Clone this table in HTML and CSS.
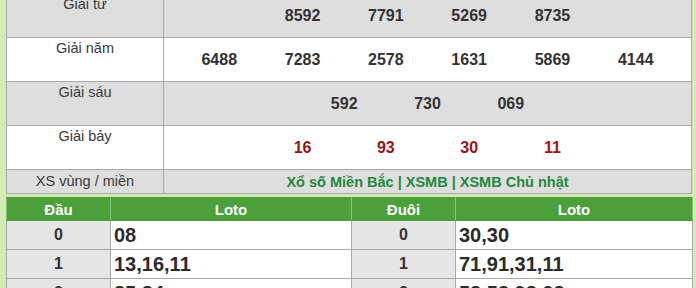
FILE: index.html
```html
<!DOCTYPE html>
<html lang="vi">
<head>
<meta charset="utf-8">
<title>XSMB</title>
<link rel="stylesheet" href="styles.css">
</head>
<body>
<div class="page">
  <table class="kq">
    <colgroup><col class="c-label"><col class="c-nums"></colgroup>
    <tbody>
      <tr class="alt"><td class="lbl">Giải tư</td><td class="nums"><span>8592</span><span>7791</span><span>5269</span><span>8735</span></td></tr>
      <tr><td class="lbl">Giải năm</td><td class="nums"><span>6488</span><span>7283</span><span>2578</span><span>1631</span><span>5869</span><span>4144</span></td></tr>
      <tr class="alt"><td class="lbl">Giải sáu</td><td class="nums"><span>592</span><span>730</span><span>069</span></td></tr>
      <tr><td class="lbl">Giải bảy</td><td class="nums red"><span>16</span><span>93</span><span>30</span><span>11</span></td></tr>
      <tr class="alt short"><td class="lbl mid">XS vùng / miền</td><td class="links"><a href="#">Xổ số Miền Bắc</a> | <a href="#">XSMB</a> | <a href="#">XSMB Chủ nhật</a></td></tr>
    </tbody>
  </table>
  <table class="loto">
    <colgroup><col class="c-key"><col class="c-val"><col class="c-key"><col class="c-val2"></colgroup>
    <thead>
      <tr><th>Đầu</th><th>Loto</th><th>Đuôi</th><th>Loto</th></tr>
    </thead>
    <tbody>
      <tr><td class="key">0</td><td class="val">08</td><td class="key">0</td><td class="val">30,30</td></tr>
      <tr><td class="key">1</td><td class="val">13,16,11</td><td class="key">1</td><td class="val">71,91,31,11</td></tr>
      <tr><td class="key">2</td><td class="val">25,24</td><td class="key">2</td><td class="val">52,52,92,92</td></tr>
    </tbody>
  </table>
</div>
</body>
</html>
```
FILE: styles.css
```css
body {
  margin: 0;
  background: #d5ebb4;
  font-family: "Liberation Sans", Arial, sans-serif;
  color: #333;
}
.page {
  margin-top: -7px;
  padding: 0 4px 0 6px;
}
table {
  border-collapse: collapse;
  table-layout: fixed;
  width: 686px;
}
.c-label { width: 157px; }
.kq td {
  border: 1px solid #a9a9a9;
  padding: 0;
  height: 43px;
  background: #fff;
}
.kq tr.alt td { background: #dedede; }
.kq tr.short td { height: 23px; }
.kq td.lbl {
  vertical-align: top;
  text-align: center;
  font-size: 14.5px;
  line-height: 17px;
  padding-top: 2px;
  height: 41px;
  color: #3a3a3a;
}
.kq tr.short td.lbl { height: 23px; }
.kq td.lbl.mid { vertical-align: middle; padding-top: 0; }
.kq td.nums {
  text-align: center;
  vertical-align: middle;
  font-size: 16px;
  font-weight: bold;
  white-space: nowrap;
}
.kq td.nums span {
  display: inline-block;
  width: 83.3px;
}
.kq td.red { color: #9e1313; }
.kq td.links {
  text-align: center;
  font-size: 14.5px;
  font-weight: bold;
  color: #23893c;
}
.kq td.links a { color: #23893c; text-decoration: none; }
.loto { margin-top: 3px; }
.c-key { width: 104px; }
.c-val { width: 241px; }
.c-val2 { width: 237px; }
.loto th {
  background: #4ba03c;
  color: #fff;
  font-size: 15px;
  font-weight: bold;
  height: 22px;
  padding: 0;
  border: 1px solid #4ba03c;
  border-left-color: #8cc57c;
  border-right-color: #8cc57c;
}
.loto td {
  border: 1px solid #a9a9a9;
  height: 28px;
  padding: 0;
}
.loto td.key {
  background: #e5e5e5;
  text-align: center;
  font-size: 16px;
  font-weight: bold;
}
.loto td.val {
  background: #fff;
  font-size: 20px;
  font-weight: bold;
  padding-left: 3px;
  color: #2b2b2b;
}
```
